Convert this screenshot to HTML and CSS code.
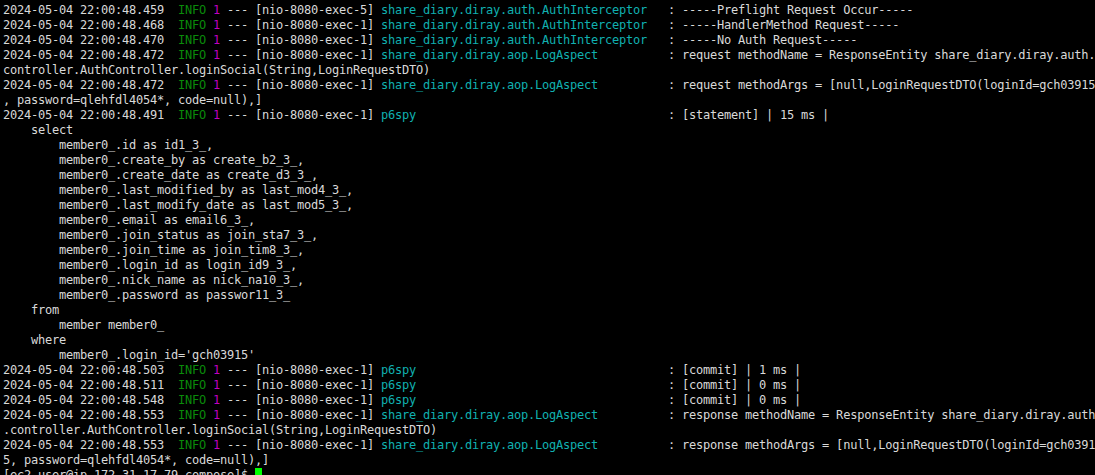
FILE: index.html
```html
<!DOCTYPE html>
<html lang="en">
<head>
<meta charset="utf-8">
<title>terminal</title>
<link rel="stylesheet" href="styles.css">
</head>
<body>
<pre class="term">2024-05-04 22:00:48.459  <span class="lv">INFO</span> <span class="pid">1</span> --- [nio-8080-exec-5] <span class="lg">share_diary.diray.auth.AuthInterceptor  </span> : -----Preflight Request Occur-----
2024-05-04 22:00:48.468  <span class="lv">INFO</span> <span class="pid">1</span> --- [nio-8080-exec-1] <span class="lg">share_diary.diray.auth.AuthInterceptor  </span> : -----HandlerMethod Request-----
2024-05-04 22:00:48.470  <span class="lv">INFO</span> <span class="pid">1</span> --- [nio-8080-exec-1] <span class="lg">share_diary.diray.auth.AuthInterceptor  </span> : -----No Auth Request-----
2024-05-04 22:00:48.472  <span class="lv">INFO</span> <span class="pid">1</span> --- [nio-8080-exec-1] <span class="lg">share_diary.diray.aop.LogAspect         </span> : request methodName = ResponseEntity share_diary.diray.auth.
controller.AuthController.loginSocial(String,LoginRequestDTO)
2024-05-04 22:00:48.472  <span class="lv">INFO</span> <span class="pid">1</span> --- [nio-8080-exec-1] <span class="lg">share_diary.diray.aop.LogAspect         </span> : request methodArgs = [null,LoginRequestDTO(loginId=gch03915
, password=qlehfdl4054*, code=null),]
2024-05-04 22:00:48.491  <span class="lv">INFO</span> <span class="pid">1</span> --- [nio-8080-exec-1] <span class="lg">p6spy                                   </span> : [statement] | 15 ms |
    select
        member0_.id as id1_3_,
        member0_.create_by as create_b2_3_,
        member0_.create_date as create_d3_3_,
        member0_.last_modified_by as last_mod4_3_,
        member0_.last_modify_date as last_mod5_3_,
        member0_.email as email6_3_,
        member0_.join_status as join_sta7_3_,
        member0_.join_time as join_tim8_3_,
        member0_.login_id as login_id9_3_,
        member0_.nick_name as nick_na10_3_,
        member0_.password as passwor11_3_
    from
        member member0_
    where
        member0_.login_id='gch03915'
2024-05-04 22:00:48.503  <span class="lv">INFO</span> <span class="pid">1</span> --- [nio-8080-exec-1] <span class="lg">p6spy                                   </span> : [commit] | 1 ms |
2024-05-04 22:00:48.511  <span class="lv">INFO</span> <span class="pid">1</span> --- [nio-8080-exec-1] <span class="lg">p6spy                                   </span> : [commit] | 0 ms |
2024-05-04 22:00:48.548  <span class="lv">INFO</span> <span class="pid">1</span> --- [nio-8080-exec-1] <span class="lg">p6spy                                   </span> : [commit] | 0 ms |
2024-05-04 22:00:48.553  <span class="lv">INFO</span> <span class="pid">1</span> --- [nio-8080-exec-1] <span class="lg">share_diary.diray.aop.LogAspect         </span> : response methodName = ResponseEntity share_diary.diray.auth
.controller.AuthController.loginSocial(String,LoginRequestDTO)
2024-05-04 22:00:48.553  <span class="lv">INFO</span> <span class="pid">1</span> --- [nio-8080-exec-1] <span class="lg">share_diary.diray.aop.LogAspect         </span> : response methodArgs = [null,LoginRequestDTO(loginId=gch0391
5, password=qlehfdl4054*, code=null),]
[ec2-user@ip-172-31-17-79 compose]$ <span class="cursor"> </span></pre>
</body>
</html>
```

FILE: styles.css
```css
html, body {
  margin: 0;
  padding: 0;
  background: #000000;
  height: 100%;
  overflow: hidden;
}

.term {
  margin: 0;
  padding: 3px 0 0 3px;
  font-family: "DejaVu Sans Mono", "Liberation Mono", monospace;
  font-size: 12px;
  letter-spacing: -0.224px;
  line-height: 15px;
  color: #d9d9d9;
  white-space: pre;
  overflow: hidden;
}

.lv {
  color: #0a8a0a;
}

.pid {
  color: #c000c0;
}

.lg {
  color: #10b0b0;
}

.cursor {
  background: #00ff00;
}
```
